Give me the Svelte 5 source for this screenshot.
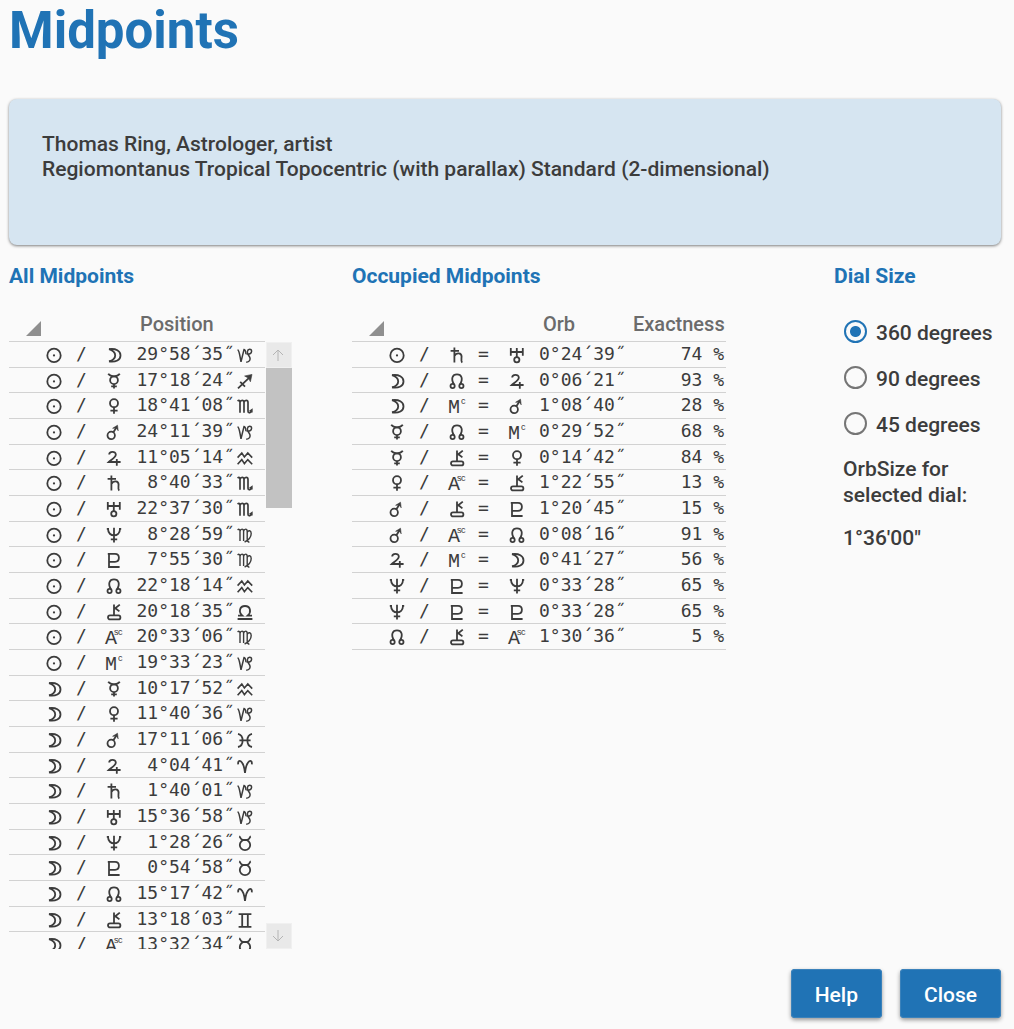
<script>
  const shapes = {
    sun: '<circle cx="8" cy="8.4" r="6.7"/><circle cx="8" cy="8.4" r="1.1" fill="currentColor" stroke="none"/>',
    moon: '<path d="M3 2.2C10 1.2 14.5 4 14.5 8.4S10 15.4 3 14.4"/><path d="M3 2.2C7 3.6 9.2 5.4 9.2 8.4S7 13.2 3 14.4"/>',
    mercury: '<circle cx="8" cy="7.2" r="3.9"/><path d="M2.2 .8C3.6 2.6 5.4 3.3 8 3.3S12.4 2.6 13.8 .8M8 11V15.6M5.2 13.4H10.8"/>',
    venus: '<circle cx="8" cy="5.2" r="4"/><path d="M8 9V15.8M4.4 12.6H11.6"/>',
    mars: '<circle cx="5.2" cy="11.4" r="3.7"/><path d="M7.2 8.4L10.4 3.4"/><path d="M6.6 4.3L11.5 1.2L12.2 6.8L10.4 4Z" fill="currentColor" stroke-width=".6"/>',
    jupiter: '<path d="M3.2 4.6C3.2 1 9.8 .8 9.8 4.6C9.8 7.8 5.6 9.4 2.8 12H14.6M10.8 9V15.8"/>',
    saturn: '<path d="M5.4 .6V15.6M1.6 3.8H10M5.4 9C7.4 5.4 12.6 5.4 12.6 9.8C12.4 12.2 11.8 14 13.2 15.6"/>',
    uranus: '<path d="M1.8 1V8.8M13.8 1V8.8M1.8 5H13.8M7.8 1V10.2"/><circle cx="7.8" cy="12.8" r="2.6"/>',
    neptune: '<path d="M.8 1.8H3M2 1.8C2 10.6 14 10.6 14 1.8M13 1.8H15.2M8 .8V15.6M4.8 12.4H11.2"/>',
    pluto: '<path d="M3 .9V15H13.6M1.8 1.8H9C14.2 1.8 14.2 9.8 9 9.8H3"/>',
    node: '<circle cx="3.6" cy="13" r="2.1"/><circle cx="12.4" cy="13" r="2.1"/><path d="M5 11.4C1.6 5.6 3.4 1.4 8 1.4S14.4 5.6 11 11.4"/>',
    chiron: '<rect x="2" y="11.4" width="12.4" height="4" rx="2"/><path d="M8 .4V11.2M8.6 4.8L13.8 .6M9.4 4.2L13.4 7.4"/>',
    asc: '<text x="-1" y="15">A<tspan class="small" x="8" y="6">s</tspan><tspan class="small" x="12" y="6">c</tspan></text>',
    mc: '<text x="-1" y="15">M<tspan class="small" x="12" y="6">c</tspan></text>',
    capricorn: '<g stroke-width="1.5"><path d="M.6 2.8C2.4 3.4 2.6 8 4 14.8L7 2.6C8.6 3 8.8 5 9 7.2"/><path d="M9.2 15.2C12.4 15 13.8 12.8 12.8 10.4C12 8.4 10 7.2 10.4 4.6C10.8 1.6 14.6 1.4 14.6 4.2C14.6 6.6 12 7.6 9.6 6.8"/></g>',
    sagittarius: '<path d="M1 15.4L12 4.8M3.2 8.8L8 13.6"/><path d="M7.6 3L15 1.4L13.4 8.8L11.6 5.2Z" fill="currentColor" stroke-width=".6"/>',
    scorpio: '<g stroke-width="1.7"><path d="M.6 3.2C2 1.8 3 2.4 3 4.6V14.8M3 4.4C3.6 1.6 7 1.6 7 4.4V14.8M7 4.4C7.6 1.6 11 1.6 11 4.4V13.2C11 15.2 13.4 15.4 14.4 13.2"/><path d="M12.6 13.4L14.8 11.8V14.6"/></g>',
    virgo: '<g stroke-width="1.4"><path d="M.6 3C2 1.6 3 2.4 3 4.6V14M3 4.4C3.6 1.4 6.6 1.4 6.6 4.4V14M6.6 4.4C7.2 1.4 10.2 1.4 10.2 4.4V12C10.2 14 11 15 12.4 15.4M10.2 5.4C11.6 2.6 14.2 3.4 14.2 6.6C14.2 10.4 11 13.4 7.6 15"/></g>',
    aquarius: '<g stroke-width="1.6"><path d="M.6 7.6L4.8 3L7.4 7L10.8 3L15.2 7.6M.6 14.2L4.8 9.6L7.4 13.6L10.8 9.6L15.2 14.2"/></g>',
    libra: '<path d="M1 11.6H5.4C1.2 8 2.6 2 8 2S14.8 8 10.6 11.6H15M.6 15H15.4"/>',
    pisces: '<path d="M1 1.8C3.8 2.4 5.6 5 5.6 8.4S3.8 14.4 1 15M15 1.8C12.2 2.4 10.4 5 10.4 8.4S12.2 14.4 15 15M2.4 8.4H13.6"/>',
    aries: '<path d="M1.2 6.4C.4 .6 6.4 1 8 14.8C9.6 1 15.6 .6 14.8 6.4"/>',
    taurus: '<path d="M2.2 1.4C3.2 1.8 3.2 3.4 4.8 4.6C6 5.2 10 5.2 11.2 4.6C12.8 3.4 12.8 1.8 13.8 1.4"/><ellipse cx="8" cy="10" rx="5.2" ry="5.2"/>',
    gemini: '<path d="M1.6 2.2H14.4M1.6 14.8H14.4M5.2 2.2V14.8M10.8 2.2V14.8"/>'
  };

  const midpoints = [
    ['sun', 'moon', '29°58´35˝', 'capricorn'],
    ['sun', 'mercury', '17°18´24˝', 'sagittarius'],
    ['sun', 'venus', '18°41´08˝', 'scorpio'],
    ['sun', 'mars', '24°11´39˝', 'capricorn'],
    ['sun', 'jupiter', '11°05´14˝', 'aquarius'],
    ['sun', 'saturn', '8°40´33˝', 'scorpio'],
    ['sun', 'uranus', '22°37´30˝', 'scorpio'],
    ['sun', 'neptune', '8°28´59˝', 'virgo'],
    ['sun', 'pluto', '7°55´30˝', 'virgo'],
    ['sun', 'node', '22°18´14˝', 'aquarius'],
    ['sun', 'chiron', '20°18´35˝', 'libra'],
    ['sun', 'asc', '20°33´06˝', 'virgo'],
    ['sun', 'mc', '19°33´23˝', 'capricorn'],
    ['moon', 'mercury', '10°17´52˝', 'aquarius'],
    ['moon', 'venus', '11°40´36˝', 'capricorn'],
    ['moon', 'mars', '17°11´06˝', 'pisces'],
    ['moon', 'jupiter', '4°04´41˝', 'aries'],
    ['moon', 'saturn', '1°40´01˝', 'capricorn'],
    ['moon', 'uranus', '15°36´58˝', 'capricorn'],
    ['moon', 'neptune', '1°28´26˝', 'taurus'],
    ['moon', 'pluto', '0°54´58˝', 'taurus'],
    ['moon', 'node', '15°17´42˝', 'aries'],
    ['moon', 'chiron', '13°18´03˝', 'gemini'],
    ['moon', 'asc', '13°32´34˝', 'taurus']
  ];

  const occupied = [
    ['sun', 'saturn', 'uranus', '0°24´39˝', 74],
    ['moon', 'node', 'jupiter', '0°06´21˝', 93],
    ['moon', 'mc', 'mars', '1°08´40˝', 28],
    ['mercury', 'node', 'mc', '0°29´52˝', 68],
    ['mercury', 'chiron', 'venus', '0°14´42˝', 84],
    ['venus', 'asc', 'chiron', '1°22´55˝', 13],
    ['mars', 'chiron', 'pluto', '1°20´45˝', 15],
    ['mars', 'asc', 'node', '0°08´16˝', 91],
    ['jupiter', 'mc', 'moon', '0°41´27˝', 56],
    ['neptune', 'pluto', 'neptune', '0°33´28˝', 65],
    ['neptune', 'pluto', 'pluto', '0°33´28˝', 65],
    ['node', 'chiron', 'asc', '1°30´36˝', 5]
  ];

  const dials = [360, 90, 45];
  let dial = $state(360);
</script>

{#snippet glyph(name)}
  <svg class="glyph" viewBox="0 0 16 16" role="img" aria-label={name}>{@html shapes[name]}</svg>
{/snippet}

{#snippet sorter()}
  <svg class="sorter" viewBox="0 0 15 15" aria-hidden="true"><path d="M15 0V15H0Z" /></svg>
{/snippet}

<main>
  <h1>Midpoints</h1>

  <section class="info">
    <p>Thomas Ring, Astrologer, artist</p>
    <p>Regiomontanus Tropical Topocentric (with parallax) Standard (2-dimensional)</p>
  </section>

  <div class="columns">
    <section>
      <h2>All Midpoints</h2>
      <div class="list">
        <div class="viewport">
          <table class="all">
            <colgroup>
              <col class="lead" /><col class="body" /><col class="slash" /><col class="body" /><col class="position" /><col />
            </colgroup>
            <thead>
              <tr>
                <th>{@render sorter()}</th>
                <th></th><th></th><th></th>
                <th class="title" colspan="2">Position</th>
              </tr>
            </thead>
            <tbody>
              {#each midpoints as [a, b, position, sign]}
                <tr>
                  <td></td>
                  <td class="sym">{@render glyph(a)}</td>
                  <td>/</td>
                  <td class="sym">{@render glyph(b)}</td>
                  <td class="num">{position}</td>
                  <td class="sym">{@render glyph(sign)}</td>
                </tr>
              {/each}
            </tbody>
          </table>
        </div>
        <div class="scrollbar">
          <button type="button" aria-label="Scroll up">
            <svg viewBox="0 0 12 12"><path d="M6 12V1M1 6L6 1L11 6" /></svg>
          </button>
          <div class="track"><div class="thumb"></div></div>
          <button type="button" aria-label="Scroll down">
            <svg viewBox="0 0 12 12"><path d="M6 0V11M1 6L6 11L11 6" /></svg>
          </button>
        </div>
      </div>
    </section>

    <section>
      <h2>Occupied Midpoints</h2>
      <table class="occupied">
        <colgroup>
          <col class="lead" /><col class="body" /><col class="slash" /><col class="other" /><col class="other" /><col class="body" /><col class="orb" /><col />
        </colgroup>
        <thead>
          <tr>
            <th>{@render sorter()}</th>
            <th></th><th></th><th></th><th></th><th></th>
            <th class="title">Orb</th>
            <th class="title right">Exactness</th>
          </tr>
        </thead>
        <tbody>
          {#each occupied as [a, b, c, orb, exactness]}
            <tr>
              <td></td>
              <td class="sym">{@render glyph(a)}</td>
              <td>/</td>
              <td class="sym">{@render glyph(b)}</td>
              <td>=</td>
              <td class="sym">{@render glyph(c)}</td>
              <td>{orb}</td>
              <td class="num">{exactness} %</td>
            </tr>
          {/each}
        </tbody>
      </table>
    </section>

    <section>
      <h2 id="dial-title">Dial Size</h2>
      <div class="dial">
        <div role="radiogroup" aria-labelledby="dial-title">
          {#each dials as size}
            <label><input type="radio" name="dial" value={size} bind:group={dial} /><span>{size} degrees</span></label>
          {/each}
        </div>
        <p>OrbSize for selected dial:</p>
        <p class="value">1°36'00"</p>
      </div>
    </section>
  </div>

  <footer>
    <button type="button" class="action">Help</button>
    <button type="button" class="action">Close</button>
  </footer>
</main>

<style>
  :global(body) {
    background: #fafafa;
  }

  main {
    padding: 1px 13px 11px 9px;
    color: #3c3c3c;
    font: 500 21px/26px Roboto, "Liberation Sans", sans-serif;
  }

  h1, h2, p {
    margin: 0;
  }

  h1 {
    margin-bottom: 38px;
    color: #2073b5;
    font-size: 51px;
    line-height: 60px;
    font-weight: 700;
  }

  h2 {
    margin-bottom: 19px;
    color: #2073b5;
    font-size: 21px;
    line-height: 24px;
    font-weight: 700;
  }

  .info {
    box-sizing: border-box;
    min-height: 146px;
    padding: 33px;
    border-radius: 8px;
    background: #d6e5f1;
    box-shadow: 0 1px 3px rgba(0, 0, 0, .5);
    line-height: 25px;
  }

  .columns {
    display: grid;
    grid-template-columns: 343px 1fr 167px;
    margin-top: 19px;
  }

  .list {
    display: flex;
  }

  .viewport {
    width: 257px;
    height: 642px;
    overflow: hidden;
  }

  table {
    border-collapse: separate;
    border-spacing: 0;
    table-layout: fixed;
    text-align: left;
  }

  .all { width: 256px; }
  .occupied { width: 374px; }
  .lead { width: 36px; }
  .body { width: 31px; }
  .slash { width: 29px; }
  .other { width: 30px; }
  .position { width: 100px; }
  .orb { width: 90px; }

  th, td {
    padding: 0;
    border-bottom: 1px solid #d2d2d2;
  }

  th {
    height: 34px;
    color: #6b6b6b;
    font-size: 20px;
    font-weight: 500;
    line-height: 24px;
  }

  .title {
    padding: 0 4px;
  }

  .right {
    text-align: right;
  }

  td {
    height: 25px;
    vertical-align: top;
    font: 400 18px/24px "DejaVu Sans Mono", monospace;
    white-space: nowrap;
  }

  tr:nth-child(3n + 2) td {
    height: 24px;
  }

  .num {
    padding-right: 2px;
    text-align: right;
  }

  td.sym {
    padding: 5px 0 0 1px;
    height: 20px;
  }

  tr:nth-child(3n + 2) td.sym {
    height: 19px;
  }

  .glyph {
    display: block;
    width: 16px;
    height: 16px;
    overflow: visible;
    fill: none;
    stroke: currentColor;
    stroke-width: 1.8;
  }

  .glyph :global(text) {
    fill: currentColor;
    stroke: none;
    font-family: "Liberation Mono", monospace;
    font-size: 20px;
  }

  .glyph :global(.small) {
    font-family: "Liberation Sans", sans-serif;
    font-size: 9px;
  }

  .sorter {
    display: block;
    width: 15px;
    height: 15px;
    margin: 8px 0 0 17px;
    fill: #8f8f8f;
  }

  .scrollbar {
    display: flex;
    flex-direction: column;
    width: 26px;
    margin-top: 35px;
  }

  .scrollbar button {
    display: flex;
    align-items: center;
    height: 26px;
    padding: 0 0 0 5px;
    border: 1px solid #f0f0f0;
    background: #e9e9e9;
  }

  .scrollbar svg {
    width: 12px;
    height: 12px;
    fill: none;
    stroke: #b4b4b4;
  }

  .track {
    flex: 1;
  }

  .thumb {
    height: 140px;
    background: #c2c2c2;
  }

  .dial {
    padding: 11px 0 0 9px;
  }

  label {
    display: flex;
    align-items: center;
    gap: 9px;
    height: 26px;
    margin-bottom: 20px;
    white-space: nowrap;
  }

  label span {
    padding-top: 4px;
  }

  input {
    flex: none;
    appearance: none;
    width: 23px;
    height: 23px;
    margin: 0 0 0 1px;
    border: 2px solid #757575;
    border-radius: 50%;
  }

  input:checked {
    border-color: #2073b5;
    background: radial-gradient(circle, #2073b5 0 5px, transparent 6px);
  }

  .dial p {
    max-width: 150px;
  }

  .dial .value {
    margin-top: 17px;
  }

  footer {
    display: flex;
    justify-content: flex-end;
    gap: 18px;
    margin-top: 20px;
  }

  .action {
    height: 49px;
    padding: 3px 24px 0;
    border: 0;
    border-radius: 4px;
    background: #2073b5;
    box-shadow: inset 0 0 0 1px #3b82bb, 0 2px 4px rgba(0, 0, 0, .4);
    color: #fff;
    font: 500 21px/24px Roboto, "Liberation Sans", sans-serif;
  }
</style>
